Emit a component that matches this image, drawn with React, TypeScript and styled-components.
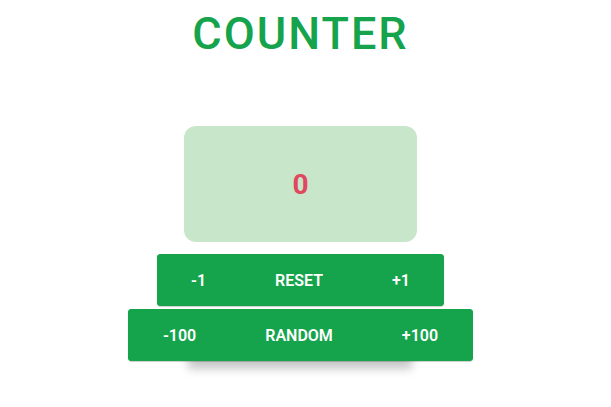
import { FC, useState } from 'react';
import styled, { createGlobalStyle } from 'styled-components';

const GlobalStyle = createGlobalStyle`
  body {
    margin: 0;
    background: #ffffff;
    font-family: Roboto, 'Liberation Sans', sans-serif;
  }
`;

const green = '#15a34b';

interface IRowButton {
  label: string;
  onClick: () => void;
}

const ButtonRow: FC<{ items: IRowButton[] }> = ({ items }) => (
  <SRow>
    {items.map((item) => (
      <SButton key={item.label} onClick={item.onClick}>
        {item.label}
      </SButton>
    ))}
  </SRow>
);

const App: FC = () => {
  const [count, setCount] = useState(0);
  const add = (n: number) => () => setCount((c) => c + n);

  return (
    <>
      <GlobalStyle />
      <SPage>
        <STitle>COUNTER</STitle>
        <SDisplay>
          <SValue>{count}</SValue>
        </SDisplay>
        <SControls>
          <ButtonRow
            items={[
              { label: '-1', onClick: add(-1) },
              { label: 'RESET', onClick: () => setCount(0) },
              { label: '+1', onClick: add(1) },
            ]}
          />
          <ButtonRow
            items={[
              { label: '-100', onClick: add(-100) },
              {
                label: 'RANDOM',
                onClick: () => setCount(Math.floor(Math.random() * 201) - 100),
              },
              { label: '+100', onClick: add(100) },
            ]}
          />
        </SControls>
      </SPage>
    </>
  );
};

export default App;

const SPage = styled.div`
  box-sizing: border-box;
  width: 601px;
  min-height: 100vh;
  display: flex;
  flex-direction: column;
  align-items: center;
  padding: 10px 0 40px;
`;

const STitle = styled.h1`
  margin: 0;
  font-size: 45px;
  line-height: 47px;
  font-weight: 500;
  letter-spacing: 2px;
  color: ${green};
`;

const SDisplay = styled.div`
  margin-top: 69px;
  width: 233px;
  height: 116px;
  border-radius: 12px;
  background: #c8e6c9;
  display: flex;
  align-items: center;
  justify-content: center;
`;

const SValue = styled.span`
  font-size: 28px;
  font-weight: 700;
  color: #e0485f;
`;

const SControls = styled.div`
  position: relative;
  margin-top: 12px;
  display: flex;
  flex-direction: column;
  align-items: center;
  gap: 3px;

  &::after {
    content: '';
    position: absolute;
    left: 50%;
    bottom: 2px;
    width: 224px;
    height: 30px;
    transform: translateX(-50%);
    box-shadow: 0 10px 10px rgba(0, 0, 0, 0.22);
    z-index: -1;
  }
`;

const SRow = styled.div`
  display: flex;
  border-radius: 4px;
  background: ${green};
  overflow: hidden;
  box-shadow: 0 1px 1px rgba(0, 0, 0, 0.2);
`;

const SButton = styled.button`
  height: 52px;
  padding: 0 34.5px;
  border: none;
  background: ${green};
  color: #ffffff;
  font-family: Roboto, 'Liberation Sans', sans-serif;
  font-size: 16px;
  font-weight: 600;
  cursor: pointer;
`;
